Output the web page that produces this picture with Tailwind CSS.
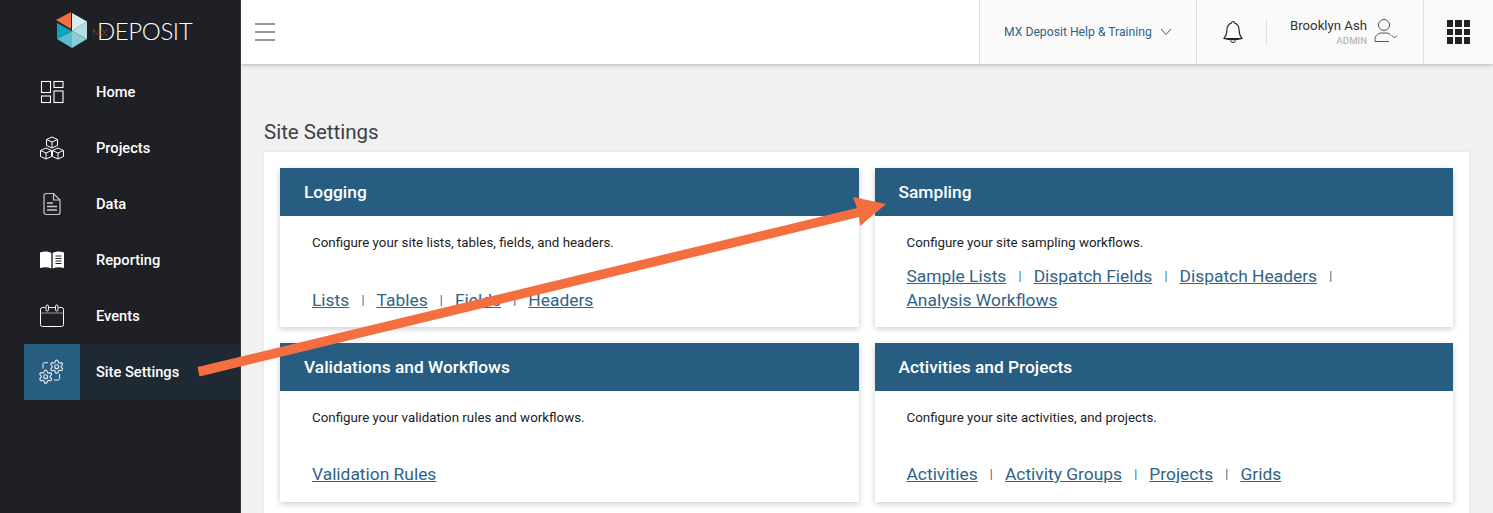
<!DOCTYPE html>
<html lang="en">
<head>
  <meta charset="UTF-8">
  <title>MX Deposit - Site Settings</title>
  <script src="https://cdn.jsdelivr.net/npm/@tailwindcss/browser@4"></script>
</head>
<body class="font-['Roboto',sans-serif] overflow-hidden">
  <div class="relative w-[1493px] h-[513px] flex overflow-hidden bg-[#f1f1f1]">

    <!-- Sidebar -->
    <aside class="w-[241px] h-full shrink-0 bg-[#1e2025] border-r border-[#33363b] text-white z-20">
      <div class="h-[64px] flex items-start pl-[56px]">
        <svg width="32" height="37" viewBox="0 0 32 37" class="shrink-0 mt-[12px]">
          <polygon points="16,1 31,9.500 16,19" fill="#d5ecf1"/>
          <polygon points="31,9.500 31,27 16,19" fill="#b5dde4"/>
          <polygon points="31,27 16,36 16,19" fill="#8accd7"/>
          <polygon points="16,36 1,27 16,19" fill="#5dbccb"/>
          <polygon points="1,27 1,11 16,19" fill="#0aa5bd"/>
          <polygon points="0,8 15,0 15,17" fill="#f56e3f"/>
        </svg>
        <div class="relative ml-[9px] mt-[19px] font-['Lato',sans-serif] font-light text-[24px] leading-[24px] tracking-[-0.4px] text-white whitespace-nowrap">
          <span class="absolute left-[-5px] top-[8px] text-[10px] leading-[10px] tracking-[0px] text-[#a04a30]">MX</span>
          <span>DEPOSIT</span>
        </div>
      </div>
      <nav class="text-[14.670px] font-medium">
        <a class="h-[56px] flex items-center ml-[24px]">
          <span class="w-[56px] flex justify-center">
            <svg width="24" height="24" viewBox="0 0 24 24" fill="none" stroke="#fff" stroke-width="1.100"><rect x="1.500" y="1.500" width="9" height="11"/><rect x="14" y="1.500" width="9" height="6"/><rect x="1.500" y="16" width="9" height="6.500"/><rect x="14" y="11" width="9" height="11.500"/></svg>
          </span>
          <span class="ml-[16px]">Home</span>
        </a>
        <a class="h-[56px] flex items-center ml-[24px]">
          <span class="w-[56px] flex justify-center">
            <svg width="26" height="24" viewBox="0 0 26 24" fill="none" stroke="#fff" stroke-width="1"><path d="M13 1l5.500 2.500v6L13 12 7.500 9.500v-6zM7.500 3.500L13 6l5.500-2.500M13 6v6"/><path d="M7 12l5.500 2.500v6L7 23l-5.500-2.500v-6zM1.500 14.500L7 17l5.500-2.500M7 17v6"/><path d="M19 12l5.500 2.500v6L19 23l-5.500-2.500v-6zM13.500 14.500L19 17l5.500-2.500M19 17v6"/></svg>
          </span>
          <span class="ml-[16px]">Projects</span>
        </a>
        <a class="h-[56px] flex items-center ml-[24px]">
          <span class="w-[56px] flex justify-center">
            <svg width="20" height="24" viewBox="0 0 20 24" fill="none" stroke="#c9c9c9" stroke-width="1.200"><path d="M4 1.500h7.500L18 8v12.500a2 2 0 0 1-2 2H4a2 2 0 0 1-2-2v-17a2 2 0 0 1 2-2z"/><path d="M11.500 1.500V8H18"/><path d="M5 11h6M5 14.500h10M5 18h10" stroke-width="1.300"/></svg>
          </span>
          <span class="ml-[16px]">Data</span>
        </a>
        <a class="h-[56px] flex items-center ml-[24px]">
          <span class="w-[56px] flex justify-center">
            <svg width="24" height="20" viewBox="0 0 24 20"><path d="M0 2.500c4-1.500 8-1.500 11.300 0.500v15.500C8 17 4 17 0 18z" fill="#fff"/><path d="M12.700 3c3.300-2 7.300-2 11.300-0.500V18c-4-1-8-1-11.300 0.500z" fill="#fff"/><path d="M15.500 6h6M15.500 8.500h6M15.500 11h6M15.500 13.500h6" stroke="#1e2025" stroke-width="1.200"/></svg>
          </span>
          <span class="ml-[16px]">Reporting</span>
        </a>
        <a class="h-[56px] flex items-center ml-[24px]">
          <span class="w-[56px] flex justify-center">
            <svg width="24" height="24" viewBox="0 0 24 24" fill="none" stroke="#fff" stroke-width="1"><path d="M5 3.500H2.500a2 2 0 0 0-2 2v15a2 2 0 0 0 2 2h19a2 2 0 0 0 2-2v-15a2 2 0 0 0-2-2H19M9 3.500h6"/><path d="M0.500 9h23" stroke="#999"/><rect x="6" y="1" width="2.500" height="6" rx="1.200"/><rect x="15.500" y="1" width="2.500" height="6" rx="1.200"/></svg>
          </span>
          <span class="ml-[16px]">Events</span>
        </a>
        <a class="h-[56px] flex items-center ml-[24px] bg-[#1f2933]">
          <span class="w-[56px] h-full flex items-center justify-center bg-[#275d80]">
            <svg class="overflow-visible" width="26" height="26" viewBox="0 0 26 26" fill="none" stroke="#e4ecf1">
              <defs>
                <g id="gear"><path stroke-width="1.800" d="M12.220 2h-.44a2 2 0 0 0-2 2v.18a2 2 0 0 1-1 1.730l-.43.25a2 2 0 0 1-2 0l-.15-.08a2 2 0 0 0-2.730.73l-.22.38a2 2 0 0 0 .73 2.730l.15.1a2 2 0 0 1 1 1.720v.51a2 2 0 0 1-1 1.740l-.15.09a2 2 0 0 0-.73 2.730l.22.38a2 2 0 0 0 2.730.73l.15-.08a2 2 0 0 1 2 0l.43.25a2 2 0 0 1 1 1.730V20a2 2 0 0 0 2 2h.44a2 2 0 0 0 2-2v-.18a2 2 0 0 1 1-1.730l.43-.25a2 2 0 0 1 2 0l.15.08a2 2 0 0 0 2.730-.73l.22-.39a2 2 0 0 0-.73-2.730l-.15-.08a2 2 0 0 1-1-1.740v-.5a2 2 0 0 1 1-1.740l.15-.09a2 2 0 0 0 .73-2.730l-.22-.38a2 2 0 0 0-2.730-.73l-.15.08a2 2 0 0 1-2 0l-.43-.25a2 2 0 0 1-1-1.730V4a2 2 0 0 0-2-2z"/><circle cx="12" cy="12" r="3" stroke-width="1.800"/></g>
              </defs>
              <use href="#gear" transform="translate(9.900,-0.100) scale(0.65)"/>
              <use href="#gear" transform="translate(-1.100,9.900) scale(0.65)"/>
              <path d="M9 3.700H5.500A1.500 1.500 0 0 0 4 5.200V9.500M15 21h4a1.500 1.500 0 0 0 1.500-1.500V15" stroke-width="1"/>
            </svg>
          </span>
          <span class="ml-[16px]">Site Settings</span>
        </a>
      </nav>
    </aside>

    <div class="flex-1 min-w-0 flex flex-col">
      <!-- Top bar -->
      <header class="h-[64px] shrink-0 bg-white flex items-stretch shadow-[0_1px_4px_rgba(0,0,0,0.25)] z-10">
        <div class="flex items-center pl-[14px]">
          <svg width="20" height="18" viewBox="0 0 20 18" stroke="#777" stroke-width="1.300"><path d="M0 1h20M0 9h20M0 17h20"/></svg>
        </div>
        <div class="ml-auto flex items-center w-[217px] bg-[#fafafa] border-l border-[#e0e0e0] pl-[24px] text-[12.200px] text-[#2f6388]">
          <span>MX Deposit Help &amp; Training</span>
          <svg class="ml-[8px]" width="12" height="8" viewBox="0 0 12 8" fill="none" stroke="#2f6388" stroke-width="1"><path d="M1 1l5 5.500L11 1"/></svg>
        </div>
        <div class="flex items-center w-[227px] bg-[#fafafa] border-l border-[#e0e0e0]">
          <svg class="ml-[26px]" width="20" height="24" viewBox="0 0 20 24" fill="none" stroke="#222" stroke-width="1.100"><path d="M10 1.500c-.9 0-1.500.6-1.500 1.500-3 1-4.500 3.500-4.500 6.500 0 4-1 6.500-3 9h18c-2-2.500-3-5-3-9 0-3-1.500-5.500-4.500-6.500 0-.9-.6-1.500-1.500-1.500z"/><path d="M1 18.500c5 1.300 13 1.300 18 0M7.500 20.500c.3 1.300 1.300 2 2.500 2s2.200-.7 2.500-2"/></svg>
          <div class="ml-[23px] w-px h-[25px] bg-[#ddd]"></div>
          <div class="ml-[22px] w-[78px] shrink-0 text-right mt-[1px]">
            <div class="text-[13.200px] leading-[15px] text-[#333] whitespace-nowrap">Brooklyn Ash</div>
            <div class="text-[9.600px] leading-[13px] mt-[1px] text-[#aaa]">ADMIN</div>
          </div>
          <svg class="ml-[7px] mt-[-2px]" width="25" height="26" viewBox="0 0 25 26" fill="none" stroke="#555" stroke-width="1"><circle cx="10" cy="7" r="5.500"/><path d="M1 23.500v-2c0-4 3-6 6-6.500h6c1.500.3 3 1 4 2.500M1 23.500h14"/><path d="M18 17.500l2.500 2.500 2.500-2.500"/></svg>
        </div>
        <div class="w-[70px] flex items-center justify-center bg-[#fafafa] border-l border-[#e0e0e0]">
          <div class="grid grid-cols-3 gap-[2px]">
            <i class="block w-[6.500px] h-[6.500px] bg-[#222]"></i><i class="block w-[6.500px] h-[6.500px] bg-[#222]"></i><i class="block w-[6.500px] h-[6.500px] bg-[#222]"></i>
            <i class="block w-[6.500px] h-[6.500px] bg-[#222]"></i><i class="block w-[6.500px] h-[6.500px] bg-[#222]"></i><i class="block w-[6.500px] h-[6.500px] bg-[#222]"></i>
            <i class="block w-[6.500px] h-[6.500px] bg-[#222]"></i><i class="block w-[6.500px] h-[6.500px] bg-[#222]"></i><i class="block w-[6.500px] h-[6.500px] bg-[#222]"></i>
          </div>
        </div>
      </header>

      <!-- Content -->
      <main class="pl-[23px] pr-[24px]">
        <h1 class="mt-[57px] h-[22px] text-[20.500px] leading-[23px] text-[#3c4148]">Site Settings</h1>
        <div class="mt-[9px] bg-white p-[16px] pb-[40px] grid grid-cols-[579px_578px] gap-x-[16px] gap-y-[16px] shadow-[0_0_3px_rgba(0,0,0,0.08)]">

          <section class="h-[159px] bg-white shadow-[0_2px_6px_rgba(0,0,0,0.2)]">
            <h2 class="h-[48px] flex items-center pl-[24px] pt-[1px] bg-[#275d80] text-white text-[17.330px] font-medium">Logging</h2>
            <div class="pl-[32px] pt-[19px]">
              <p class="text-[13.330px] leading-[15px] text-[#1c1c1c]">Configure your site lists, tables, fields, and headers.</p>
              <div class="mt-[38px] text-[17.400px] leading-[24px] text-[#2f6388] flex">
                <a class="underline">Lists</a><span class="text-[12px] mx-[12.200px]">|</span>
                <a class="underline">Tables</a><span class="text-[12px] mx-[12.200px]">|</span>
                <a class="underline">Fields</a><span class="text-[12px] mx-[12.200px]">|</span>
                <a class="underline">Headers</a>
              </div>
            </div>
          </section>

          <section class="h-[159px] bg-white shadow-[0_2px_6px_rgba(0,0,0,0.2)]">
            <h2 class="h-[48px] flex items-center pl-[23.500px] pt-[1px] bg-[#275d80] text-white text-[17.330px] font-medium">Sampling</h2>
            <div class="pl-[31.500px] pt-[19px]">
              <p class="text-[13.330px] leading-[15px] text-[#1c1c1c]">Configure your site sampling workflows.</p>
              <div class="mt-[14px] text-[17.400px] leading-[24px] text-[#2f6388]">
                <div class="flex">
                  <a class="underline">Sample Lists</a><span class="text-[12px] mx-[12.200px]">|</span>
                  <a class="underline">Dispatch Fields</a><span class="text-[12px] mx-[12.200px]">|</span>
                  <a class="underline">Dispatch Headers</a><span class="text-[12px] mx-[12.200px]">|</span>
                </div>
                <a class="underline">Analysis Workflows</a>
              </div>
            </div>
          </section>

          <section class="h-[159px] bg-white shadow-[0_2px_6px_rgba(0,0,0,0.2)]">
            <h2 class="h-[48px] flex items-center pl-[24px] pt-[1px] bg-[#275d80] text-white text-[17.330px] font-medium">Validations and Workflows</h2>
            <div class="pl-[32px] pt-[19px]">
              <p class="text-[13.330px] leading-[15px] text-[#1c1c1c]">Configure your validation rules and workflows.</p>
              <div class="mt-[37px] text-[17.400px] leading-[24px] text-[#2f6388] flex">
                <a class="underline">Validation Rules</a>
              </div>
            </div>
          </section>

          <section class="h-[159px] bg-white shadow-[0_2px_6px_rgba(0,0,0,0.2)]">
            <h2 class="h-[48px] flex items-center pl-[23.500px] pt-[1px] bg-[#275d80] text-white text-[17.330px] font-medium">Activities and Projects</h2>
            <div class="pl-[31.500px] pt-[19px]">
              <p class="text-[13.330px] leading-[15px] text-[#1c1c1c]">Configure your site activities, and projects.</p>
              <div class="mt-[37px] text-[17.400px] leading-[24px] text-[#2f6388] flex">
                <a class="underline">Activities</a><span class="text-[12px] mx-[12.200px]">|</span>
                <a class="underline">Activity Groups</a><span class="text-[12px] mx-[12.200px]">|</span>
                <a class="underline">Projects</a><span class="text-[12px] mx-[12.200px]">|</span>
                <a class="underline">Grids</a>
              </div>
            </div>
          </section>
        </div>
      </main>
    </div>

    <!-- Annotation arrow -->
    <svg class="absolute left-0 top-0 z-30 pointer-events-none" width="1493" height="513" viewBox="0 0 1493 513">
      <polygon points="197.500,367 857,208 853,197 886,204 860,226 859,217 199.500,376.500" fill="#f56e3f"/>
    </svg>
  </div>
</body>
</html>
